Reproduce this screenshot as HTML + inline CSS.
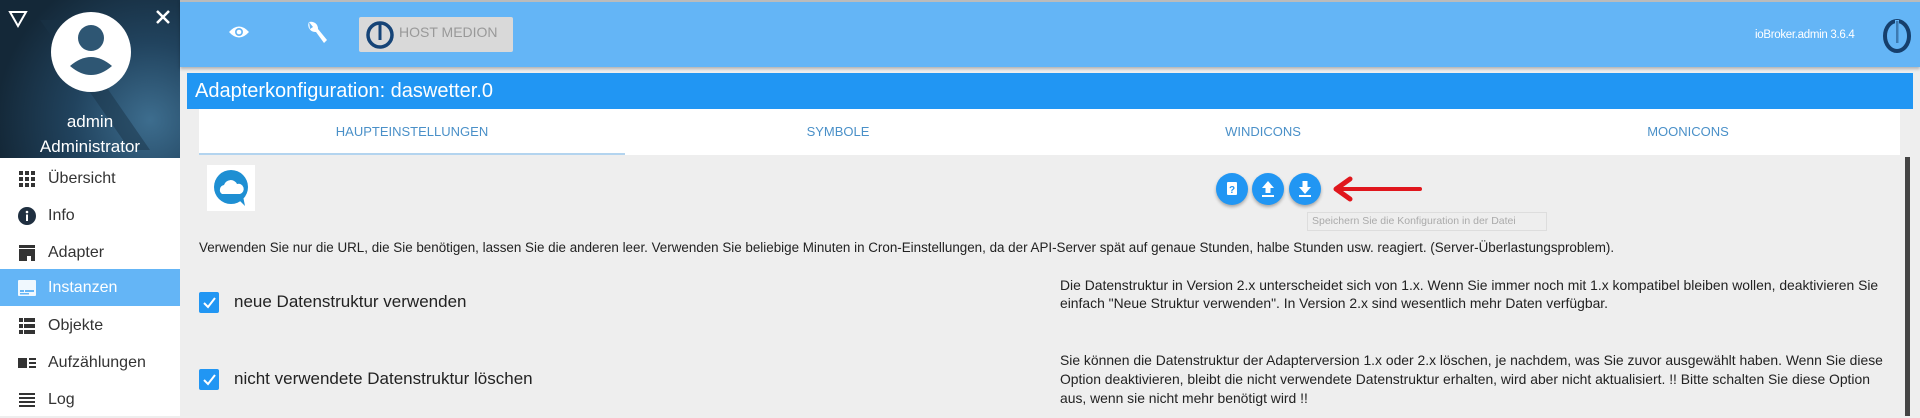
<!DOCTYPE html>
<html><head><meta charset="utf-8">
<style>
*{box-sizing:border-box;margin:0;padding:0}
body{width:1920px;height:416px;overflow:hidden;background:#eeeeee;font-family:"Liberation Sans",sans-serif;position:relative}
.abs{position:absolute}
#side{left:0;top:0;width:180px;height:416px;background:#fff}
#sidehead{left:0;top:0;width:180px;height:158px;background:radial-gradient(circle at 150px 120px,#3d6d8e 0,#21435e 40%,#142838 80%);overflow:hidden}
.mi{position:absolute;left:0;width:180px;height:37px;font-size:16px;color:#333;line-height:37px;padding-left:48px}
.mi.act{background:#64b5f6;color:#fff}
.ic{position:absolute;left:18px;top:10px;width:18px;height:18px}
#top{left:180px;top:0;width:1740px;height:67px;background:#64b5f6;border-top:2px solid #bbb;box-shadow:0 2px 3px rgba(0,0,0,.25)}
#title{left:187px;top:73px;width:1726px;height:36px;background:#2196f3;color:#fff;font-size:20px;line-height:36px;padding-left:8px}
#tabs{left:199px;top:109px;width:1701px;height:46px;background:#fff}
.tab{position:absolute;top:0;height:46px;line-height:46px;font-size:13px;color:#4a90c8;text-align:center;width:426px}
p.t{position:absolute;font-size:12.4px;color:#222;white-space:nowrap}
.cb{position:absolute;left:199px;width:20px;height:21px;background:#2196f3;border-radius:2px}
.lbl{position:absolute;left:234px;font-size:17px;color:#222}
.btn{position:absolute;top:173px;width:32px;height:32px;border-radius:50%;background:#2196f3;box-shadow:0 2px 3px rgba(0,0,0,.3)}
</style></head><body>
<div id="side" class="abs">
 <div id="sidehead" class="abs">
  <svg class="abs" style="left:0;top:0" width="180" height="158">
   <path d="M40 20 L130 150 L150 150 L60 20Z" fill="#1a3347" opacity=".5"/>
   <path d="M10 12 L26 12 L18 26Z" fill="none" stroke="#fff" stroke-width="2"/>
   <path d="M157 11 L169 23 M169 11 L157 23" stroke="#fff" stroke-width="2.5"/>
   <circle cx="91" cy="52" r="40" fill="#fff"/>
   <circle cx="91" cy="38" r="13" fill="#2e5673"/>
   <path d="M70 66 Q91 48 112 66 Q91 84 70 66Z" fill="#2e5673"/>
   <text x="90" y="127" fill="#fff" font-size="17" text-anchor="middle" font-family="Liberation Sans">admin</text>
   <text x="90" y="152" fill="#fff" font-size="17" text-anchor="middle" font-family="Liberation Sans">Administrator</text>
  </svg>
 </div>
 <div class="mi" style="top:160px"><svg class="ic" viewBox="0 0 18 18"><g fill="#333"><rect x="1" y="1" width="4" height="4"/><rect x="7" y="1" width="4" height="4"/><rect x="13" y="1" width="4" height="4"/><rect x="1" y="7" width="4" height="4"/><rect x="7" y="7" width="4" height="4"/><rect x="13" y="7" width="4" height="4"/><rect x="1" y="13" width="4" height="4"/><rect x="7" y="13" width="4" height="4"/><rect x="13" y="13" width="4" height="4"/></g></svg>Übersicht</div>
 <div class="mi" style="top:197px"><svg class="ic" viewBox="0 0 18 18"><circle cx="9" cy="9" r="9" fill="#1f2f40"/><rect x="8" y="7.5" width="2" height="6.5" fill="#fff"/><circle cx="9" cy="5" r="1.3" fill="#fff"/></svg>Info</div>
 <div class="mi" style="top:234px"><svg class="ic" viewBox="0 0 18 18"><rect x="1" y="1" width="16" height="3" fill="#333"/><path d="M1 5h16v4H1z M1 9h16v8h-4v-5H9v5H1z" fill="#333"/></svg>Adapter</div>
 <div class="mi act" style="top:269px"><svg class="ic" viewBox="0 0 18 18"><rect x="0" y="1" width="18" height="16" rx="1" fill="#fff" opacity=".9"/><rect x="2" y="11" width="4" height="2" fill="#64b5f6"/><rect x="7" y="11" width="9" height="2" fill="#64b5f6"/><rect x="2" y="14" width="9" height="1.5" fill="#64b5f6"/></svg>Instanzen</div>
 <div class="mi" style="top:307px"><svg class="ic" viewBox="0 0 18 18"><g fill="#333"><rect x="1" y="1" width="4" height="4"/><rect x="6" y="1" width="11" height="4"/><rect x="1" y="7" width="4" height="4"/><rect x="6" y="7" width="11" height="4"/><rect x="1" y="13" width="4" height="4"/><rect x="6" y="13" width="11" height="4"/></g></svg>Objekte</div>
 <div class="mi" style="top:344px"><svg class="ic" viewBox="0 0 18 18"><g fill="#333"><rect x="0" y="4" width="9" height="10"/><rect x="11" y="4" width="7" height="2"/><rect x="11" y="8" width="7" height="2"/><rect x="11" y="12" width="7" height="2"/></g></svg>Aufzählungen</div>
 <div class="mi" style="top:381px"><svg class="ic" viewBox="0 0 18 18"><g fill="#333"><rect x="1" y="2" width="16" height="2"/><rect x="1" y="6" width="16" height="2"/><rect x="1" y="10" width="16" height="2"/><rect x="1" y="14" width="16" height="2"/></g></svg>Log</div>
</div>
<div id="top" class="abs">
 <svg class="abs" style="left:48px;top:22px" width="22" height="16" viewBox="0 0 22 16"><path d="M1 8 Q11 -3 21 8 Q11 19 1 8Z" fill="#fff"/><circle cx="11" cy="8" r="4" fill="#64b5f6"/><circle cx="11" cy="8" r="2.3" fill="#fff"/></svg>
 <svg class="abs" style="left:126px;top:17px" width="22" height="26" viewBox="0 0 22 26"><path d="M3 3 A7 7 0 0 0 10 13 L18 24 L21 21 L12 10 A7 7 0 0 0 3 3 L7 8 L4 10Z" fill="#fff"/></svg>
 <div class="abs" style="left:179px;top:15px;width:154px;height:35px;background:#d9d9d9;border-radius:2px"></div>
 <svg class="abs" style="left:185px;top:18px" width="30" height="30" viewBox="0 0 30 30"><circle cx="15" cy="15" r="12" fill="none" stroke="#164477" stroke-width="3.5"/><rect x="13.5" y="3" width="3" height="17" fill="#164477"/></svg>
 <div class="abs" style="left:219px;top:22px;font-size:14px;color:#999">HOST MEDION</div>
 <div class="abs" style="left:1575px;top:27px;font-size:11.5px;color:#fff;letter-spacing:-.3px">ioBroker.admin 3.6.4</div>
 <svg class="abs" style="left:1700px;top:14px" width="34" height="40" viewBox="0 0 34 40"><ellipse cx="17" cy="20" rx="12" ry="15" fill="none" stroke="#163f6c" stroke-width="4"/><rect x="15" y="4" width="4" height="23" fill="#64b5f6"/><rect x="16" y="5" width="2.5" height="22" fill="#163f6c" opacity=".5"/></svg>
</div>
<div id="title" class="abs">Adapterkonfiguration: daswetter.0</div>
<div id="tabs" class="abs">
 <div class="tab" style="left:0">HAUPTEINSTELLUNGEN</div>
 <div class="tab" style="left:426px">SYMBOLE</div>
 <div class="tab" style="left:851px">WINDICONS</div>
 <div class="tab" style="left:1276px">MOONICONS</div>
</div>
<div class="abs" style="left:199px;top:153px;width:426px;height:2px;background:#b3d4ef"></div>
<div class="abs" style="left:1905px;top:157px;width:5px;height:259px;background:#444"></div>
<div class="abs" style="left:207px;top:165px;width:48px;height:46px;background:#fff"></div>
<svg class="abs" style="left:211px;top:168px" width="42" height="40" viewBox="0 0 42 40"><circle cx="20" cy="19" r="17" fill="#1e8fd3"/><path d="M28 32 L34 38 L32 28Z" fill="#1e8fd3"/><path d="M11 26 a5 5 0 0 1 2 -9 a7 7 0 0 1 13 -1 a5 5 0 0 1 3 10Z" fill="#fff"/></svg>
<div class="btn" style="left:1216px"><svg width="32" height="32"><rect x="11" y="9" width="10" height="13" rx="1" fill="#fff"/><text x="16" y="20" font-size="10" fill="#2196f3" text-anchor="middle" font-family="Liberation Sans" font-weight="bold">?</text></svg></div>
<div class="btn" style="left:1252px"><svg width="32" height="32"><path d="M16 8 L22 15 H18.5 V20 H13.5 V15 H10Z" fill="#fff"/><rect x="10" y="22" width="12" height="2" fill="#fff"/></svg></div>
<div class="btn" style="left:1289px"><svg width="32" height="32"><path d="M16 21 L22 14 H18.5 V8 H13.5 V14 H10Z" fill="#fff"/><rect x="10" y="22" width="12" height="2" fill="#fff"/></svg></div>
<svg class="abs" style="left:1328px;top:176px" width="96" height="26"><path d="M10 13 H92" stroke="#e0161c" stroke-width="4" stroke-linecap="round"/><path d="M22 3 L8 13 L22 23" stroke="#e0161c" stroke-width="5" fill="none" stroke-linecap="round" stroke-linejoin="round"/></svg>
<div class="abs" style="left:1307px;top:212px;width:240px;height:19px;border:1px solid #ddd;background:#eee;font-size:10.5px;color:#aaa;line-height:17px;padding-left:4px;white-space:nowrap">Speichern Sie die Konfiguration in der Datei</div>
<p class="t" style="left:199px;top:240px;font-size:13.4px">Verwenden Sie nur die URL, die Sie benötigen, lassen Sie die anderen leer. Verwenden Sie beliebige Minuten in Cron-Einstellungen, da der API-Server spät auf genaue Stunden, halbe Stunden usw. reagiert. (Server-Überlastungsproblem).</p>
<div class="cb" style="top:292px"><svg width="20" height="21"><path d="M5 11 L9 15 L16 6" stroke="#fff" stroke-width="2" fill="none"/></svg></div>
<div class="lbl" style="top:292px">neue Datenstruktur verwenden</div>
<div class="cb" style="top:369px"><svg width="20" height="21"><path d="M5 11 L9 15 L16 6" stroke="#fff" stroke-width="2" fill="none"/></svg></div>
<div class="lbl" style="top:369px">nicht verwendete Datenstruktur löschen</div>
<p class="t" style="left:1060px;top:276px;line-height:18px;font-size:13.9px">Die Datenstruktur in Version 2.x unterscheidet sich von 1.x. Wenn Sie immer noch mit 1.x kompatibel bleiben wollen, deaktivieren Sie<br>einfach "Neue Struktur verwenden". In Version 2.x sind wesentlich mehr Daten verfügbar.</p>
<p class="t" style="left:1060px;top:351px;line-height:19px;font-size:13.9px">Sie können die Datenstruktur der Adapterversion 1.x oder 2.x löschen, je nachdem, was Sie zuvor ausgewählt haben. Wenn Sie diese<br>Option deaktivieren, bleibt die nicht verwendete Datenstruktur erhalten, wird aber nicht aktualisiert. !! Bitte schalten Sie diese Option<br>aus, wenn sie nicht mehr benötigt wird !!</p>
</body></html>
